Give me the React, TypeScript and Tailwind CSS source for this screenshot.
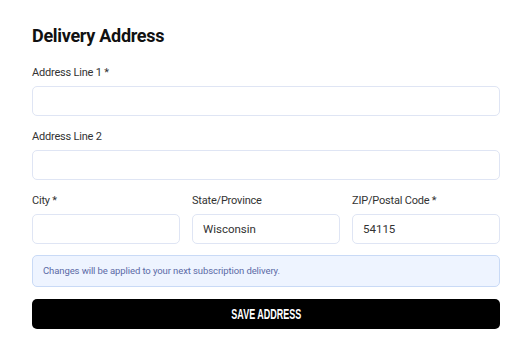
const inputCls =
  'h-[30px] w-full rounded-[5px] border border-[#dfe5f4] bg-white px-[10px] text-[11.5px] text-[#333] outline-none';

function Field({ label, value, required }: { label: string; value?: string; required?: boolean }) {
  return (
    <div className="flex flex-col">
      <label className="mb-1.5 h-[14px] text-[11px] leading-[14px] tracking-[-0.2px] text-[#333]">
        {label}
        {required ? ' *' : ''}
      </label>
      <input className={inputCls} defaultValue={value} />
    </div>
  );
}

export default function App() {
  return (
    <div className="min-h-[345px] bg-white pl-8 pt-6 font-['Roboto',sans-serif]">
      <div className="flex w-[468px] flex-col">
        <h1 className="mb-[18px] h-6 text-[18px] font-bold leading-6 tracking-[-0.3px] text-[#111]">
          Delivery Address
        </h1>
        <div className="flex flex-col gap-[14px]">
          <Field label="Address Line 1" required />
          <Field label="Address Line 2" />
          <div className="grid grid-cols-3 gap-3">
            <Field label="City" required />
            <Field label="State/Province" value="Wisconsin" />
            <Field label="ZIP/Postal Code" value="54115" required />
          </div>
        </div>
        <div className="mt-[11px] flex h-8 items-center rounded-[5px] border border-[#c9daf6] bg-[#eef4ff] px-[10px] text-[9.5px] tracking-[-0.1px] text-[#5b6aa6]">
          Changes will be applied to your next subscription delivery.
        </div>
        <button
          type="button"
          className="mt-3 flex h-[30px] items-center justify-center rounded-[5px] bg-black text-white"
        >
          <span className="inline-block scale-x-[0.6] font-['Liberation_Sans',sans-serif] text-[15px] font-bold whitespace-nowrap">
            SAVE ADDRESS
          </span>
        </button>
      </div>
    </div>
  );
}
